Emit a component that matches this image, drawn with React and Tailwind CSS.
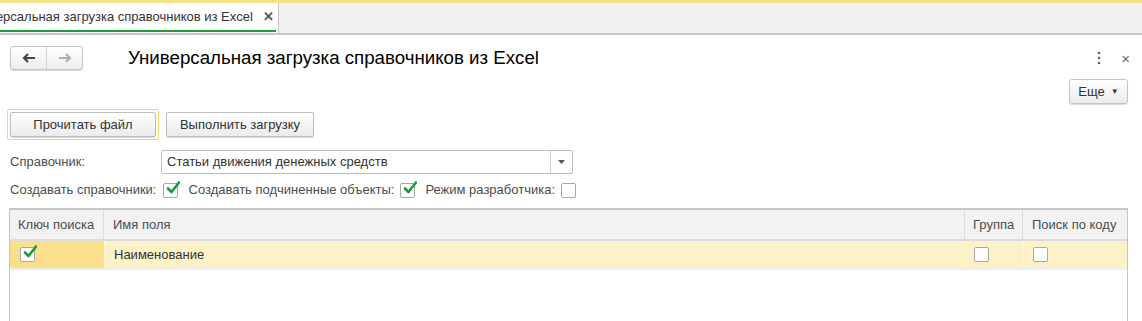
import React from "react";

const Check = () => (
  <svg width="14" height="14" viewBox="0 0 14 14" className="absolute left-[2px] top-[-3px]">
    <path d="M2 7.5 L5.5 11 L13 1.5" fill="none" stroke="#1a9a3a" strokeWidth="2.6" strokeLinecap="round" strokeLinejoin="round" />
  </svg>
);

const CheckBox = ({ checked }) => (
  <div className="relative w-[15px] h-[15px] border border-[#a8a8a8] rounded-[2px] bg-white shrink-0">
    {checked && <Check />}
  </div>
);

export default function App() {
  return (
    <div className="w-[1142px] h-[321px] bg-white overflow-hidden text-[13px] text-[#4d4d4d]" style={{ fontFamily: '"Liberation Sans", Arial, sans-serif' }}>
      {/* Tab bar */}
      <div className="h-[35px] bg-[#f0f0f0] border-t-[3px] border-[#f5e18a] border-b-2 border-b-[#c8c8c8] flex">
        <div className="w-[279px] bg-white border-r border-[#c8c8c8] relative flex items-center overflow-hidden">
          <span className="whitespace-nowrap shrink-0 ml-[-33px] text-[#333] text-[13px] mt-[-2px]">Универсальная загрузка справочников из Excel</span>
          <span className="shrink-0 ml-[10px] text-[#555] font-bold text-[13px] mt-[-2px]">✕</span>
          <div className="absolute left-0 bottom-[1px] w-[276px] h-[2px] bg-[#1d9a3a]" />
        </div>
      </div>

      {/* Header */}
      <div className="flex items-center h-[44px] pl-[10px] pr-[12px] pt-[2px]">
        <div className="flex w-[73px] h-[24px] border border-[#c4c4c4] rounded-[3px] bg-gradient-to-b from-white to-[#ececec] shadow-[0_1px_1px_rgba(0,0,0,0.15)]">
          <div className="flex-1 flex items-center justify-center border-r border-[#d4d4d4]">
            <svg width="14" height="10" viewBox="0 0 14 10"><path d="M13 5H3M6 1L2 5L6 9" fill="none" stroke="#444" strokeWidth="2.2" /></svg>
          </div>
          <div className="flex-1 flex items-center justify-center">
            <svg width="14" height="10" viewBox="0 0 14 10"><path d="M1 5H11M8 1L12 5L8 9" fill="none" stroke="#b0b0b0" strokeWidth="2.2" /></svg>
          </div>
        </div>
        <div className="ml-[45px] text-[18.7px] text-black">Универсальная загрузка справочников из Excel</div>
        <div className="ml-auto flex items-center gap-[20px] text-[#666]">
          <svg width="4" height="14" viewBox="0 0 4 14"><circle cx="2" cy="2" r="1.3" fill="#666" /><circle cx="2" cy="7" r="1.3" fill="#666" /><circle cx="2" cy="12" r="1.3" fill="#666" /></svg>
          <span className="text-[15px] leading-none">×</span>
        </div>
      </div>

      {/* Еще */}
      <div className="flex justify-end pr-[14px] h-[25px]">
        <div className="w-[59px] h-[25px] border border-[#c4c4c4] rounded-[3px] bg-gradient-to-b from-white to-[#ececec] shadow-[0_1px_1px_rgba(0,0,0,0.15)] flex items-center justify-center gap-[6px] text-[#333]">
          <span>Еще</span>
          <span className="text-[8px]">▼</span>
        </div>
      </div>

      {/* Buttons */}
      <div className="flex items-center gap-[7px] mt-[5px] pl-[7px]">
        <div className="border border-[#f3d56b] rounded-[2px] p-[2px]">
          <div className="w-[146px] h-[25px] border border-[#bdbdbd] rounded-[2px] bg-gradient-to-b from-white to-[#ebebeb] shadow-[0_1px_1px_rgba(0,0,0,0.15)] flex items-center justify-center text-[#333]">Прочитать файл</div>
        </div>
        <div className="w-[148px] h-[25px] border border-[#bdbdbd] rounded-[2px] bg-gradient-to-b from-white to-[#ebebeb] shadow-[0_1px_1px_rgba(0,0,0,0.15)] flex items-center justify-center text-[#333]">Выполнить загрузку</div>
      </div>

      {/* Справочник */}
      <div className="flex items-center mt-[10px] pl-[10px] h-[23px]">
        <span className="w-[151px]">Справочник:</span>
        <div className="w-[412px] h-[24px] border border-[#bdbdbd] rounded-[2px] flex bg-white">
          <div className="flex-1 flex items-center pl-[5px] text-[#333]">Статьи движения денежных средств</div>
          <div className="w-[22px] border-l border-[#d0d0d0] flex items-center justify-center">
            <svg width="7" height="4" viewBox="0 0 7 4"><path d="M0 0H7L3.5 4Z" fill="#555" /></svg>
          </div>
        </div>
      </div>

      {/* Checkboxes */}
      <div className="flex items-center mt-[9px] pl-[10px] h-[16px]">
        <span>Создавать справочники:</span>
        <div className="ml-[6px]"><CheckBox checked /></div>
        <span className="ml-[11px]">Создавать подчиненные объекты:</span>
        <div className="ml-[6px]"><CheckBox checked /></div>
        <span className="ml-[10px]">Режим разработчика:</span>
        <div className="ml-[6px]"><CheckBox /></div>
      </div>

      {/* Table */}
      <div className="ml-[9px] mt-[10px] w-[1119px] h-[120px] border-l border-r border-t-2 border-[#c4c4c4] border-t-[#c8c8c8]">
        <div className="flex h-[31px] bg-[#f2f2f2] border-b-2 border-[#dcdcdc]">
          <div className="w-[94px] border-r border-[#dcdcdc] flex items-center pl-[8px]">Ключ поиска</div>
          <div className="flex-1 border-r border-[#dcdcdc] flex items-center pl-[9px]">Имя поля</div>
          <div className="w-[58px] border-r border-[#dcdcdc] flex items-center pl-[8px]">Группа</div>
          <div className="w-[104px] flex items-center pl-[9px]">Поиск по коду</div>
        </div>
        <div className="flex h-[29px] bg-[#fdf1c8] border-b-2 border-[#eeeeee]">
          <div className="w-[94px] bg-[#fbe08c] flex items-center pl-[10px]"><CheckBox checked /></div>
          <div className="flex-1 flex items-center pl-[9px] border-l border-[#fff6d8] text-[#333]">Наименование</div>
          <div className="w-[58px] flex items-center pl-[8px] border-l border-[#fff6d8]"><CheckBox /></div>
          <div className="w-[104px] flex items-center pl-[9px] border-l border-[#fff6d8]"><CheckBox /></div>
        </div>
      </div>
    </div>
  );
}
